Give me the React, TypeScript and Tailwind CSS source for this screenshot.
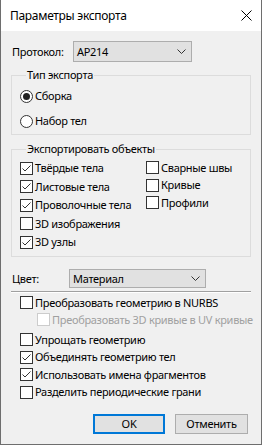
import React, { useState } from 'react';

function CheckBox({ checked, disabled }: { checked?: boolean; disabled?: boolean }) {
  return (
    <span
      className={`w-[13px] h-[13px] shrink-0 border bg-white flex items-center justify-center ${
        disabled ? 'border-[#cccccc]' : 'border-[#333333]'
      }`}
    >
      {checked && (
        <svg width="11" height="11" viewBox="0 0 11 11">
          <polyline points="1.5,5.5 4,8 9.5,2.5" fill="none" stroke="#333" strokeWidth="1" />
        </svg>
      )}
    </span>
  );
}

function Radio({ checked }: { checked?: boolean }) {
  return (
    <span className="w-[13px] h-[13px] shrink-0 rounded-full border border-[#333333] bg-white flex items-center justify-center">
      {checked && <span className="w-[7px] h-[7px] rounded-full bg-[#222222]" />}
    </span>
  );
}

function Check({ label, checked, disabled, className = '' }: { label: string; checked?: boolean; disabled?: boolean; className?: string }) {
  return (
    <label className={`flex items-center gap-[2px] whitespace-nowrap ${className}`}>
      <CheckBox checked={checked} disabled={disabled} />
      <span className={disabled ? 'text-[#a0a0a0]' : ''}>{label}</span>
    </label>
  );
}

function Chevron() {
  return (
    <svg width="9" height="6" viewBox="0 0 9 6">
      <polyline points="0.5,0.5 4.5,4.5 8.5,0.5" fill="none" stroke="#333" strokeWidth="1" />
    </svg>
  );
}

export default function App() {
  const [exportType] = useState<'assembly' | 'bodies'>('assembly');

  return (
    <div className="w-[262px] h-[445px] bg-[#f0f0f0] border-x border-b border-[#6e6e6e] flex flex-col text-[11px] leading-[16px] tracking-[-0.3px] text-black font-['Segoe_UI','Noto_Sans',sans-serif]">
      <div className="h-[31px] bg-white flex items-center justify-between pl-[9px] pr-[9px]">
        <span className="text-[12px] tracking-[-0.3px]">Параметры экспорта</span>
        <svg width="11" height="11" viewBox="0 0 11 11">
          <path d="M0.5 0.5 L10.5 10.5 M10.5 0.5 L0.5 10.5" stroke="#000" strokeWidth="1" />
        </svg>
      </div>

      <div className="flex flex-col px-[10px]">
        <div className="flex items-center mt-[10px] h-[21px]">
          <span className="ml-[1px] w-[61px]">Протокол:</span>
          <div className="w-[119px] h-[21px] bg-[#e1e1e1] border border-[#adadad] flex items-center justify-between pl-[3px] pr-[5px]">
            <span>AP214</span>
            <Chevron />
          </div>
        </div>

        <fieldset className="mt-[5px] border border-[#dcdcdc] h-[68px] px-[8px]">
          <legend className="ml-[6px] px-[1px] leading-[16px]">Тип экспорта</legend>
          <div className="flex flex-col">
            <label className="flex items-center gap-[2px] h-[18px] mt-[4px]">
              <Radio checked={exportType === 'assembly'} />
              <span>Сборка</span>
            </label>
            <label className="flex items-center gap-[2px] h-[18px] mt-[7px]">
              <Radio checked={exportType === 'bodies'} />
              <span>Набор тел</span>
            </label>
          </div>
        </fieldset>

        <fieldset className="mt-[6px] border border-[#dcdcdc] h-[116px] px-[8px]">
          <legend className="ml-[6px] px-[1px] leading-[16px]">Экспортировать объекты</legend>
          <div className="flex mt-[2px]">
            <div className="flex flex-col w-[126px] shrink-0">
              <Check label="Твёрдые тела" checked className="h-[18.5px]" />
              <Check label="Листовые тела" checked className="h-[18.5px]" />
              <Check label="Проволочные тела" checked className="h-[18.5px]" />
              <Check label="3D изображения" className="h-[18.5px]" />
              <Check label="3D узлы" checked className="h-[18.5px]" />
            </div>
            <div className="flex flex-col">
              <Check label="Сварные швы" className="h-[17.5px]" />
              <Check label="Кривые" className="h-[17.5px]" />
              <Check label="Профили" className="h-[17.5px]" />
            </div>
          </div>
        </fieldset>

        <div className="flex items-center mt-[12px] h-[19px]">
          <span className="ml-[1px] w-[57px]">Цвет:</span>
          <div className="w-[137px] h-[19px] bg-[#e1e1e1] border border-[#adadad] flex items-center justify-between pl-[3px] pr-[5px]">
            <span>Материал</span>
            <Chevron />
          </div>
        </div>

        <div className="mt-[3px] h-[2px] border-t border-[#a0a0a0] border-b border-b-white" />

        <div className="flex flex-col pl-[9px] mt-[1px]">
          <Check label="Преобразовать геометрию в NURBS" className="h-[17px]" />
          <Check label="Преобразовать 3D кривые в UV кривые" disabled className="h-[17px] pl-[17px]" />
          <Check label="Упрощать геометрию" className="h-[17.5px] mt-[3px]" />
          <Check label="Объединять геометрию тел" checked className="h-[17.5px]" />
          <Check label="Использовать имена фрагментов" checked className="h-[17.5px]" />
          <Check label="Разделить периодические грани" className="h-[17.5px]" />
        </div>

        <div className="flex justify-end gap-[10px] mt-[13px] pr-[3px]">
          <button className="w-[72px] h-[20px] bg-[#e1e1e1] border-2 border-[#0078d7] flex items-center justify-center">OK</button>
          <button className="w-[73px] h-[20px] bg-[#e1e1e1] border border-[#adadad] flex items-center justify-center">Отменить</button>
        </div>
      </div>
    </div>
  );
}
